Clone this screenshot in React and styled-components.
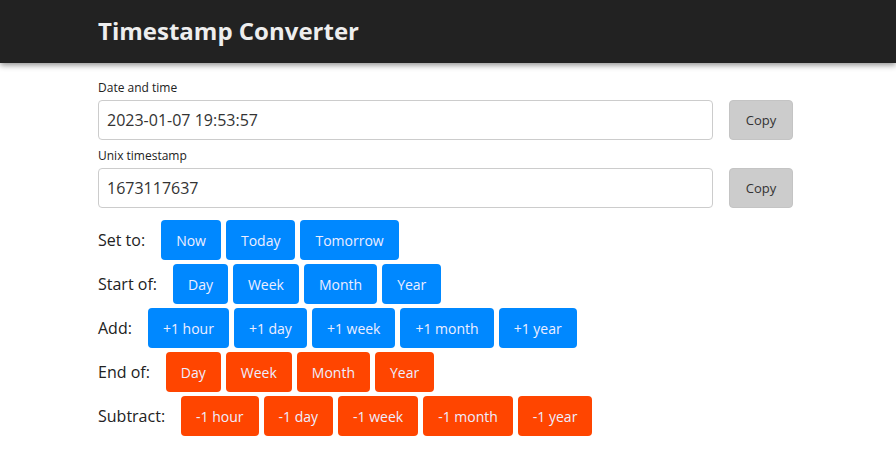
import styled, { createGlobalStyle } from "styled-components";

const GlobalStyle = createGlobalStyle`
  body {
    margin: 0;
    background: #fff;
    font-family: "Open Sans", "Noto Sans", sans-serif;
    color: #222;
  }
`;

const rows = [
  { label: "Set to:", tone: "blue", items: ["Now", "Today", "Tomorrow"] },
  { label: "Start of:", tone: "blue", items: ["Day", "Week", "Month", "Year"] },
  { label: "Add:", tone: "blue", items: ["+1 hour", "+1 day", "+1 week", "+1 month", "+1 year"] },
  { label: "End of:", tone: "red", items: ["Day", "Week", "Month", "Year"] },
  { label: "Subtract:", tone: "red", items: ["-1 hour", "-1 day", "-1 week", "-1 month", "-1 year"] },
];

export default function App() {
  return (
    <>
      <GlobalStyle />
      <Header>
        <Inner>
          <Title>Timestamp Converter</Title>
        </Inner>
      </Header>
      <Main>
        <Field>
          <FieldLabel>Date and time</FieldLabel>
          <FieldRow>
            <TextInput defaultValue="2023-01-07 19:53:57" />
            <CopyButton>Copy</CopyButton>
          </FieldRow>
        </Field>
        <Field>
          <FieldLabel>Unix timestamp</FieldLabel>
          <FieldRow>
            <TextInput defaultValue="1673117637" />
            <CopyButton>Copy</CopyButton>
          </FieldRow>
        </Field>
        <Actions>
          {rows.map((row) => (
            <ActionRow key={row.label}>
              <RowLabel>{row.label}</RowLabel>
              {row.items.map((item) => (
                <ActionButton key={item} $tone={row.tone}>
                  {item}
                </ActionButton>
              ))}
            </ActionRow>
          ))}
        </Actions>
      </Main>
    </>
  );
}

const Header = styled.header`
  height: 63px;
  background: #222;
  box-shadow: 0 2px 6px rgba(0, 0, 0, 0.45);
  display: flex;
  align-items: center;
`;

const Inner = styled.div`
  width: 700px;
  margin: 0 auto;
`;

const Title = styled.h1`
  margin: 0;
  font-size: 24px;
  font-weight: 700;
  color: #eee;
  line-height: 1;
  padding-bottom: 1px;
`;

const Main = styled.main`
  width: 700px;
  margin: 0 auto;
  padding-top: 17px;
`;

const Field = styled.div`
  margin-bottom: 8px;
`;

const FieldLabel = styled.div`
  font-size: 12px;
  line-height: 16px;
  color: #222;
  margin-bottom: 4px;
`;

const FieldRow = styled.div`
  display: flex;
  align-items: center;
  gap: 16px;
`;

const TextInput = styled.input`
  box-sizing: border-box;
  width: 615px;
  height: 40px;
  padding: 0 8px;
  border: 1px solid #ccc;
  border-radius: 4px;
  font-family: "Open Sans", sans-serif;
  font-size: 16px;
  color: #333;
  outline: none;
`;

const CopyButton = styled.button`
  box-sizing: border-box;
  width: 64px;
  height: 40px;
  background: #ccc;
  border: 1px solid #c4c4c4;
  border-radius: 4px;
  font-family: "Open Sans", sans-serif;
  font-size: 13px;
  color: #333;
`;

const Actions = styled.div`
  display: flex;
  flex-direction: column;
  gap: 4px;
  margin-top: 12px;
`;

const ActionRow = styled.div`
  display: flex;
  align-items: center;
  gap: 5px;
`;

const RowLabel = styled.span`
  font-size: 16px;
  color: #222;
  margin-right: 11px;
`;

const ActionButton = styled.button`
  box-sizing: border-box;
  height: 40px;
  padding: 0 15px;
  border: none;
  border-radius: 4px;
  background: ${(p) => (p.$tone === "red" ? "#ff4500" : "#0088ff")};
  color: #eef;
  font-family: "Open Sans", sans-serif;
  font-size: 14px;
`;
